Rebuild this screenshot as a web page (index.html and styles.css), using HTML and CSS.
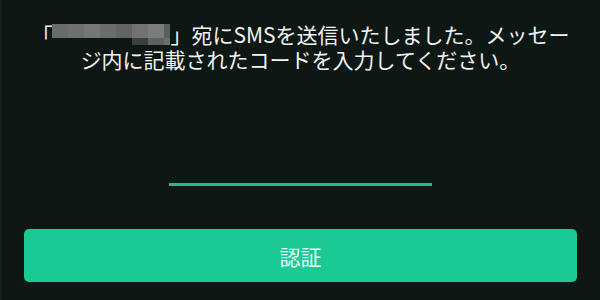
FILE: index.html
```html
<!DOCTYPE html>
<html lang="ja">
<head>
<meta charset="utf-8">
<title>SMS認証</title>
<link rel="stylesheet" href="styles.css">
</head>
<body>
<main class="screen">
  <p class="message">「<span class="masked" aria-label="電話番号"></span>」宛にSMSを送信いたしました。メッセージ内に記載されたコードを入力してください。</p>
  <div class="field">
    <input class="code-input" type="text" inputmode="numeric" aria-label="認証コード">
  </div>
  <button class="submit" type="button">認証</button>
</main>
</body>
</html>
```
FILE: styles.css
```css
html, body {
  margin: 0;
  padding: 0;
  background: #0d1714;
}

.screen {
  box-sizing: border-box;
  width: 600px;
  height: 300px;
  border-left: 2px solid #161f1c;
  display: flex;
  flex-direction: column;
  align-items: center;
  padding: 22px 23px 0 22px;
  font-family: "Noto Sans CJK JP", "Noto Sans", sans-serif;
}

.message {
  margin: 0;
  width: 100%;
  font-size: 21px;
  line-height: 25px;
  color: #f2f2f2;
  text-align: center;
}

.masked {
  display: inline-block;
  width: 118px;
  height: 21px;
  vertical-align: -2px;
  background:
    linear-gradient(90deg, #3c3f3e 0 16px, #5f6160 16px 32px, #6c6e6d 32px 38px) right bottom / 38px 7px no-repeat,
    linear-gradient(90deg,
      #6a6c6b 0 16px,
      #6f7170 16px 32px,
      #757776 32px 48px,
      #6b6d6c 48px 64px,
      #626463 64px 80px,
      #717372 80px 96px,
      #7b7d7c 96px 112px,
      #5c5e5d 112px 118px) left top / 118px 14px no-repeat;
}

.field {
  margin-top: 90px;
  display: flex;
  justify-content: center;
}

.code-input {
  width: 263px;
  height: 24px;
  box-sizing: border-box;
  padding: 0;
  border: none;
  border-bottom: 3px solid #25b98a;
  background: transparent;
  color: #f2f2f2;
  font: inherit;
  outline: none;
}

.submit {
  margin-top: 43px;
  width: 553px;
  height: 53px;
  border: none;
  border-radius: 5px;
  background: #1bc994;
  color: #e4fff3;
  font-family: "Noto Sans CJK JP", "Noto Sans", sans-serif;
  font-size: 21px;
  padding: 0;
}
```
